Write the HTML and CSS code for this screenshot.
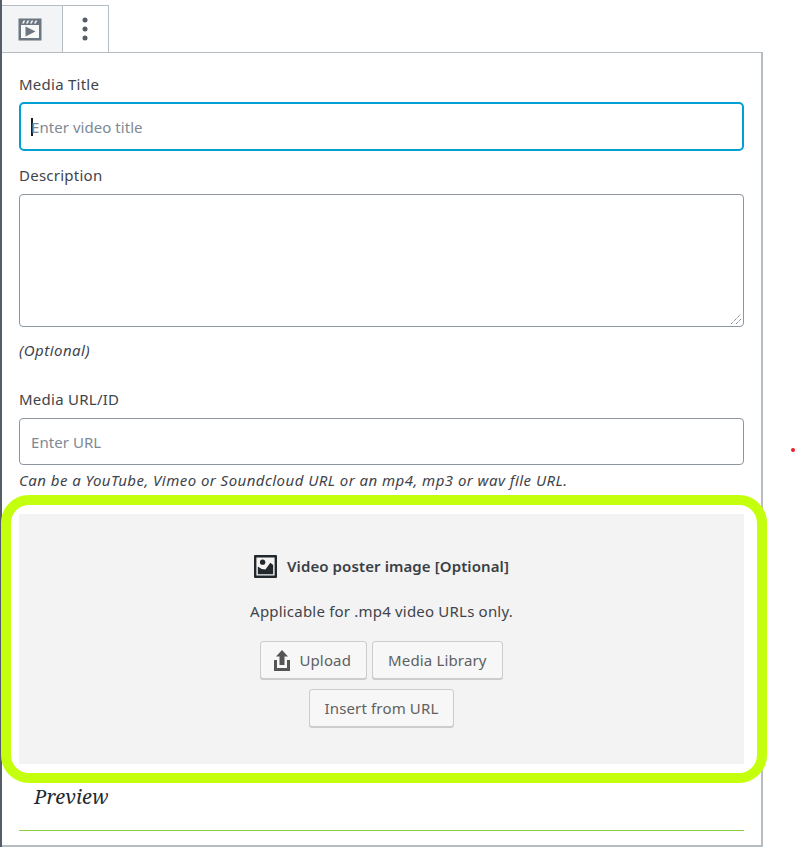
FILE: index.html
```html
<!DOCTYPE html>
<html lang="en">
<head>
<meta charset="utf-8">
<title>Media block</title>
<link rel="stylesheet" href="styles.css">
</head>
<body>
<div class="page">
  <div class="toolbar">
    <div class="tool tool-active">
      <svg width="24" height="23" viewBox="0 0 24 23"><path fill="#6c7781" d="M0.500 0.500h23v22h-23z"/><path fill="#f8f9f9" d="M3 7h18v13H3z"/><path fill="#f3f4f5" d="M5.500 2.500h1.800l-1.500 3H4zM9.500 2.500h1.800l-1.500 3H8zM13.500 2.500h1.800l-1.500 3H12zM17.500 2.500h1.800l-1.500 3H16z"/><path fill="#6c7781" d="M7.500 8.500l10 5-10 5z"/></svg>
    </div>
    <div class="tool tool-more">
      <svg width="8" height="24" viewBox="0 0 8 24"><circle cx="4" cy="3" r="2.500" fill="#555d66"/><circle cx="4" cy="12" r="2.500" fill="#555d66"/><circle cx="4" cy="21" r="2.500" fill="#555d66"/></svg>
    </div>
  </div>
  <div class="panel">
    <label class="label">Media Title</label>
    <div class="input input-focus"><span class="caret"></span><span class="placeholder">Enter video title</span></div>
    <label class="label label-desc">Description</label>
    <div class="textarea">
      <svg class="grip" width="12" height="12" viewBox="0 0 12 12"><path d="M1 11L11 1M6 11l5-5" stroke="#555d66" stroke-width="1" stroke-dasharray="1 1" fill="none"/></svg>
    </div>
    <p class="hint hint-optional">(Optional)</p>
    <label class="label label-url">Media URL/ID</label>
    <div class="input"><span class="placeholder">Enter URL</span></div>
    <p class="hint hint-url">Can be a YouTube, Vimeo or Soundcloud URL or an mp4, mp3 or wav file URL.</p>
    <div class="poster">
      <div class="poster-title">
        <svg width="23" height="23" viewBox="0 0 24 24"><path fill="#23282d" fill-rule="evenodd" d="M1 0h22a1 1 0 0 1 1 1v22a1 1 0 0 1-1 1H1a1 1 0 0 1-1-1V1a1 1 0 0 1 1-1zM2.500 2.500v19h19v-19z"/><circle cx="9" cy="7.500" r="2.800" fill="#23282d"/><path fill="#23282d" d="M4 20v-8l4 2.500 4 .5 5-7 3 2.500V20z"/></svg>
        <strong>Video poster image [Optional]</strong>
      </div>
      <p class="poster-note">Applicable for .mp4 video URLs only.</p>
      <div class="buttons">
        <button class="btn btn-upload" type="button">
          <svg width="16" height="21" viewBox="0 0 16 21"><path fill="#555" d="M8 0l6 6.500h-3.500V15h-5V6.500H2z"/><path fill="#555" d="M0 10h3v8h10v-8h3v11H0z"/></svg>
          Upload</button>
        <button class="btn" type="button">Media Library</button>
        <button class="btn" type="button">Insert from URL</button>
      </div>
    </div>
    <h2 class="preview">Preview</h2>
    <hr class="rule">
    <div class="ring"></div>
  </div>
  <span class="dot"></span>
</div>
</body>
</html>
```
FILE: styles.css
```css
* { box-sizing: border-box; }
html, body { margin: 0; padding: 0; background: #fff; }
body { font-family: "Noto Sans", sans-serif; color: #3f444a; overflow: hidden; }
.page {
  position: relative;
  width: 796px;
  height: 851px;
  padding-top: 5px;
}
.page::before {
  content: "";
  position: absolute;
  left: 0;
  top: 0;
  bottom: 4px;
  width: 2px;
  background: #555d66;
}
.toolbar { display: flex; margin-left: 2px; height: 48px; position: relative; z-index: 1; margin-bottom: -1px; }
.tool {
  width: 46px;
  height: 48px;
  display: flex;
  align-items: center;
  justify-content: center;
  border: 1px solid #b5bcc2;
  border-left: 0;
  background: #fff;
}
.tool-active { width: 61px; background: #f3f4f5; padding-right: 4px; }
.tool-more { padding-right: 2px; }
.panel {
  position: relative;
  margin-left: 2px;
  width: 761px;
  height: 795px;
  border: 1px solid #b5bcc2;
  border-width: 1px 2px 2px 0;
  padding: 21px 17px 0 17px;
}
.label { display: block; font-size: 15px; letter-spacing: 0.25px; line-height: 20px; color: #3f444a; }
.input {
  display: flex;
  align-items: center;
  height: 47px;
  margin-top: 8px;
  padding-left: 11px;
  border: 1px solid #8d96a0;
  border-radius: 4px;
  font-size: 15px;
}
.input-focus {
  height: 49px;
  margin-top: 8px;
  border: 2px solid #00a0d2;
  border-radius: 5px;
  padding-left: 10px;
}
.caret { width: 2px; height: 18px; background: #191e23; margin-right: -2px; }
.placeholder { color: #7e8993; letter-spacing: 0.05px; }
.label-desc { margin-top: 14px; }
.textarea {
  position: relative;
  height: 133px;
  margin-top: 9px;
  border: 1px solid #8d96a0;
  border-radius: 4px;
}
.grip { position: absolute; right: 1px; bottom: 1px; }
.hint { margin: 0; font-size: 15px; letter-spacing: 0.46px; line-height: 20px; font-style: italic; color: #3f444a; }
.hint-optional { margin-top: 13px; }
.label-url { margin-top: 29px; }
.label-url + .input { margin-top: 9px; height: 47px; }
.hint-url { margin-top: 5px; }
.poster {
  margin-top: 24px;
  height: 250px;
  background: #f3f3f3;
  padding-top: 40px;
  display: flex;
  flex-direction: column;
  align-items: center;
  font-size: 15px;
  letter-spacing: 0.2px;
}
.poster-title { display: flex; align-items: center; gap: 10px; height: 24px; }
.poster-title strong { font-weight: 600; color: #3a3f45; letter-spacing: 0.1px; }
.poster-note { margin: 23px 0 0; line-height: 20px; }
.buttons {
  display: flex;
  flex-wrap: wrap;
  justify-content: center;
  gap: 10px 5px;
  width: 300px;
  margin-top: 20px;
}
.btn {
  display: inline-flex;
  align-items: center;
  gap: 9px;
  height: 38px;
  padding: 0 15px;
  font: 15px "Noto Sans", sans-serif;
  letter-spacing: 0.15px;
  color: #606060;
  background: #f7f7f7;
  border: 1px solid #ccc;
  border-radius: 3px;
  box-shadow: 0 1px 0 #ccc;
}
.btn-upload { padding-left: 13px; }
.preview {
  margin: 21px 0 0 15px;
  font: italic 400 20px/24px "Noto Serif", "DejaVu Serif", "Liberation Serif", serif;
  color: #23282d;
}
.rule { margin: 21px 0 0; height: 1px; border: 0; background: #8ccf3f; }
.ring {
  position: absolute;
  left: -1px;
  top: 442px;
  width: 766px;
  height: 288px;
  border: 10px solid #c4ff0e;
  border-radius: 28px;
  pointer-events: none;
}
.dot {
  position: absolute;
  left: 791px;
  top: 448px;
  width: 4px;
  height: 4px;
  border-radius: 50%;
  background: #ed1c24;
}
```
